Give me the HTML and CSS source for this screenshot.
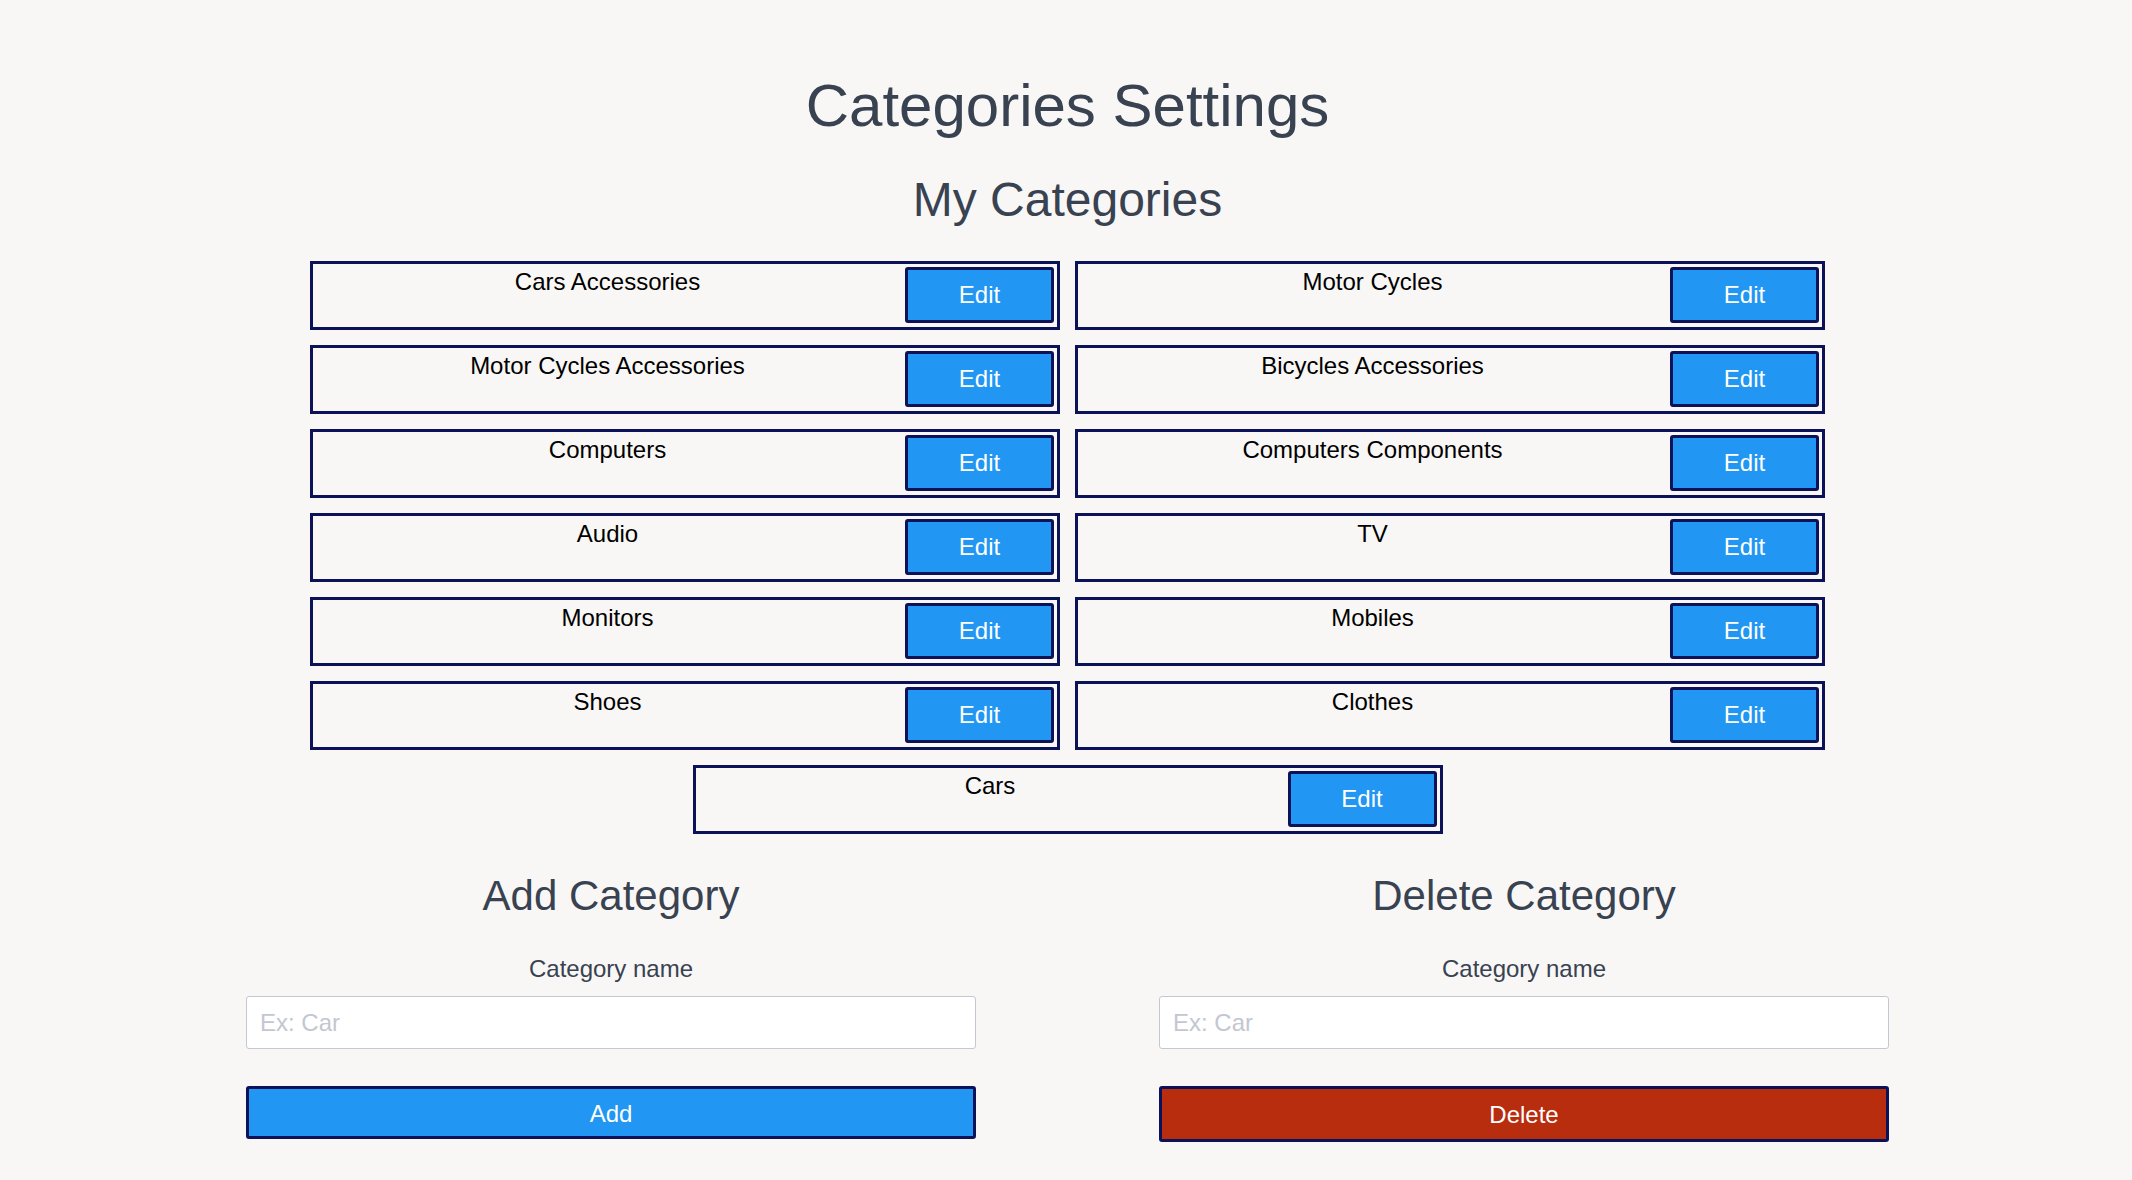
FILE: index.html
```html
<!DOCTYPE html>
<html lang="en">
<head>
<meta charset="utf-8">
<title>Categories Settings</title>
<link rel="stylesheet" href="styles.css">
</head>
<body>
<main class="page">
  <h1 class="title">Categories Settings</h1>
  <h2 class="subtitle">My Categories</h2>
  <div class="cat-list">
    <div class="cat"><span class="cat-name">Cars Accessories</span><button class="edit-btn">Edit</button></div>
    <div class="cat"><span class="cat-name">Motor Cycles</span><button class="edit-btn">Edit</button></div>
    <div class="cat"><span class="cat-name">Motor Cycles Accessories</span><button class="edit-btn">Edit</button></div>
    <div class="cat"><span class="cat-name">Bicycles Accessories</span><button class="edit-btn">Edit</button></div>
    <div class="cat"><span class="cat-name">Computers</span><button class="edit-btn">Edit</button></div>
    <div class="cat"><span class="cat-name">Computers Components</span><button class="edit-btn">Edit</button></div>
    <div class="cat"><span class="cat-name">Audio</span><button class="edit-btn">Edit</button></div>
    <div class="cat"><span class="cat-name">TV</span><button class="edit-btn">Edit</button></div>
    <div class="cat"><span class="cat-name">Monitors</span><button class="edit-btn">Edit</button></div>
    <div class="cat"><span class="cat-name">Mobiles</span><button class="edit-btn">Edit</button></div>
    <div class="cat"><span class="cat-name">Shoes</span><button class="edit-btn">Edit</button></div>
    <div class="cat"><span class="cat-name">Clothes</span><button class="edit-btn">Edit</button></div>
    <div class="cat"><span class="cat-name">Cars</span><button class="edit-btn">Edit</button></div>
  </div>
  <div class="forms">
    <section class="form-col">
      <h2 class="form-title">Add Category</h2>
      <label class="form-label">Category name</label>
      <input class="form-input" type="text" placeholder="Ex: Car">
      <button class="form-btn add-btn">Add</button>
    </section>
    <section class="form-col">
      <h2 class="form-title">Delete Category</h2>
      <label class="form-label">Category name</label>
      <input class="form-input" type="text" placeholder="Ex: Car">
      <button class="form-btn delete-btn">Delete</button>
    </section>
  </div>
</main>
</body>
</html>
```
FILE: styles.css
```css
* { box-sizing: border-box; }

html, body {
  margin: 0;
  padding: 0;
  background: #f8f7f6;
}

body {
  font-family: "Liberation Sans", Arial, sans-serif;
  color: #374151;
}

.page {
  padding: 76px 0 40px 3px;
}

.title {
  margin: 0;
  font-size: 60px;
  line-height: 1;
  font-weight: normal;
  text-align: center;
  color: #384250;
}

.subtitle {
  margin: 40px 0 0;
  font-size: 48px;
  line-height: 1;
  font-weight: normal;
  text-align: center;
  color: #384250;
}

.cat-list {
  width: 1515px;
  margin: 37px auto 0;
  display: flex;
  flex-wrap: wrap;
  justify-content: center;
  gap: 15px;
}

.cat {
  width: 750px;
  height: 69px;
  border: 3px solid #0b1257;
  display: flex;
  align-items: flex-start;
}

.cat-name {
  flex: 1;
  text-align: center;
  font-size: 24px;
  line-height: 1;
  padding: 6px 3px 0 0;
  color: #000;
}

.edit-btn {
  width: 149px;
  height: 56px;
  margin: 3px 3px 0 0;
  background: #2196f3;
  border: 3px solid #0b1257;
  border-radius: 3px;
  color: #fff;
  font-family: "Liberation Sans", Arial, sans-serif;
  font-size: 24px;
  line-height: 1;
  padding: 0;
}

.forms {
  width: 1826px;
  margin: 0 auto;
  display: grid;
  grid-template-columns: 1fr 1fr;
}

.form-col {
  display: flex;
  flex-direction: column;
  align-items: center;
}

.form-title {
  margin: 41px 0 0;
  font-size: 42px;
  line-height: 1;
  font-weight: normal;
  color: #384250;
}

.form-label {
  margin-top: 40px;
  font-size: 24px;
  line-height: 1;
  color: #384250;
}

.form-input {
  margin-top: 15px;
  width: 730px;
  height: 53px;
  border: 1px solid #c4c8d1;
  border-radius: 3px;
  background: #fff;
  padding: 0 13px;
  font-family: "Liberation Sans", Arial, sans-serif;
  font-size: 24px;
  color: #374151;
  outline: none;
}

.form-input::placeholder {
  color: #c3c7d1;
}

.form-btn {
  margin-top: 37px;
  width: 730px;
  height: 53px;
  border: 3px solid #0b1257;
  border-radius: 3px;
  color: #fff;
  font-family: "Liberation Sans", Arial, sans-serif;
  font-size: 24px;
  line-height: 1;
  padding: 2px 0 0;
}

.add-btn {
  background: #2196f3;
}

.delete-btn {
  height: 56px;
  background: #b92d0f;
}
```
